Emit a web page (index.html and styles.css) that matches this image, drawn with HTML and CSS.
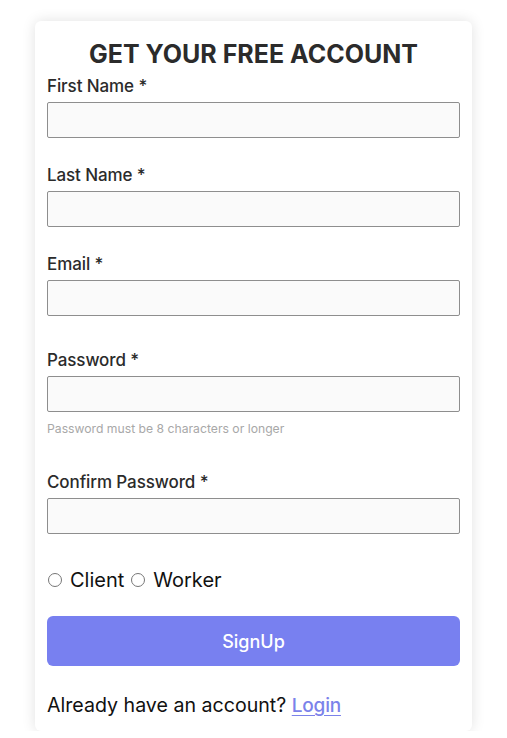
FILE: index.html
```html
<!DOCTYPE html>
<html>
<head>
<meta charset="utf-8">
<link rel="stylesheet" href="styles.css">
</head>
<body>
<div class="card">
  <h1 class="title">GET YOUR FREE ACCOUNT</h1>
  <div class="field">
    <label class="label">First Name *</label>
    <input class="input" type="text">
  </div>
  <div class="field">
    <label class="label">Last Name *</label>
    <input class="input" type="text">
  </div>
  <div class="field field-wide">
    <label class="label">Email *</label>
    <input class="input" type="text">
  </div>
  <div class="field field-hint">
    <label class="label">Password *</label>
    <input class="input" type="password">
    <div class="hint">Password must be 8 characters or longer</div>
  </div>
  <div class="field field-wide">
    <label class="label">Confirm Password *</label>
    <input class="input" type="password">
  </div>
  <div class="roles">
    <label class="role"><input type="radio" name="role" class="radio"> Client</label>
    <label class="role"><input type="radio" name="role" class="radio"> Worker</label>
  </div>
  <button class="btn">SignUp</button>
  <p class="foot">Already have an account? <a href="#" class="link">Login</a></p>
</div>
</body>
</html>
```
FILE: styles.css
```css
html, body {
  margin: 0;
  background: #fff;
}
body {
  padding: 21px 35px 0;
  font-family: Inter, "Noto Sans", sans-serif;
  color: #222;
}
.card {
  background: #fff;
  border-radius: 6px;
  box-shadow: 0 0 14px rgba(0,0,0,0.12);
  padding: 18px 12px 12px;
  display: flex;
  flex-direction: column;
}
.title {
  margin: 0 0 7px;
  font-size: 25px;
  line-height: 30px;
  font-weight: 700;
  text-align: center;
  color: #2b2b2b;
  letter-spacing: 0;
}
.field {
  display: flex;
  flex-direction: column;
  margin-bottom: 27px;
}
.field-wide {
  margin-bottom: 34px;
}
.field-hint {
  margin-bottom: 35px;
}
.label {
  font-size: 17px;
  line-height: 20px;
  font-weight: 500;
  color: #2b2b2b;
  margin-bottom: 6px;
  letter-spacing: -0.1px;
}
.input {
  box-sizing: border-box;
  height: 36px;
  margin: 0;
  border: 1px solid #8e8e8e;
  border-radius: 2px;
  background: #fafafa;
}
.hint {
  margin-top: 9px;
  font-size: 12.2px;
  line-height: 16px;
  color: #a8a8a8;
}
.roles {
  display: flex;
  gap: 6px;
  font-size: 20px;
  line-height: 24px;
  color: #111;
  margin-bottom: 24px;
}
.role {
  display: flex;
  align-items: center;
  gap: 8px;
}
.radio {
  margin: 0 0 0 1px;
  width: 14px;
  height: 14px;
}
.btn {
  height: 50px;
  border: none;
  border-radius: 6px;
  background: #7880f0;
  color: #fff;
  font-family: inherit;
  font-size: 18px;
  font-weight: 500;
  margin: 0 0 26px;
}
.foot {
  margin: 0;
  font-size: 19.6px;
  line-height: 26px;
  color: #111;
}
.link {
  color: #7b82ea;
  font-weight: 500;
  font-size: 19px;
  letter-spacing: -0.2px;
  text-decoration: underline;
  text-underline-offset: 3px;
}
```
